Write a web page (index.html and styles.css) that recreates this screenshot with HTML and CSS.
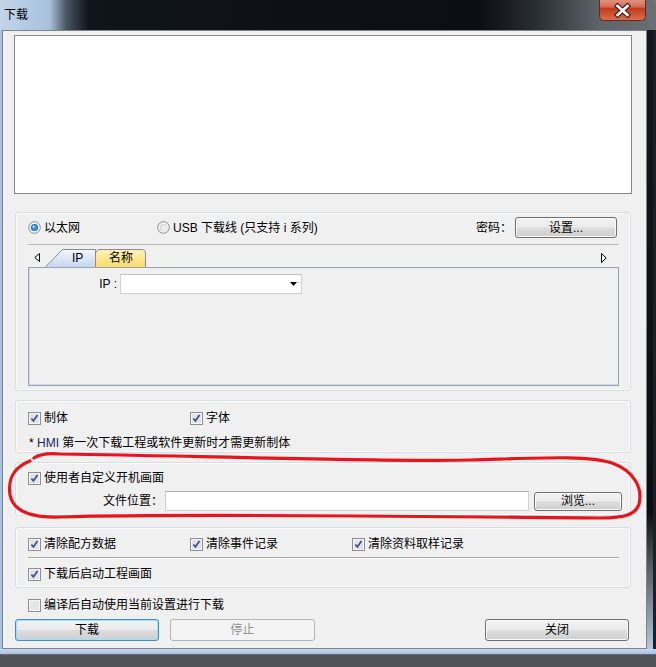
FILE: index.html
```html
<!DOCTYPE html>
<html lang="zh-CN">
<head>
<meta charset="utf-8">
<title>下载</title>
<link rel="stylesheet" href="styles.css">
</head>
<body>
<div class="screen">
  <div class="window">
    <div class="titlebar">
      <span class="title">下载</span>
      <div class="close-btn">
        <svg width="47" height="21" viewBox="0 0 47 21">
          <defs>
            <linearGradient id="cgrad" x1="0" y1="0" x2="0" y2="1">
              <stop offset="0" stop-color="#e9a595"/>
              <stop offset="0.45" stop-color="#d66a52"/>
              <stop offset="0.5" stop-color="#c3391b"/>
              <stop offset="1" stop-color="#dd6f4f"/>
            </linearGradient>
          </defs>
          <rect x="0.5" y="-4" width="46" height="24.5" rx="4" fill="url(#cgrad)" stroke="#5b2a22"/>
          <path d="M18.5 6 L28.5 15 M28.5 6 L18.5 15" stroke="#3a2424" stroke-width="5" stroke-linecap="square" fill="none"/>
          <path d="M18.5 6 L28.5 15 M28.5 6 L18.5 15" stroke="#ffffff" stroke-width="2.6" stroke-linecap="square" fill="none"/>
        </svg>
      </div>
    </div>
    <div class="frame-row">
      <div class="frame-left"></div>
      <div class="client">
        <div class="log"></div>

        <div class="panel panel-conn">
          <div class="conn-row">
            <label class="radio eth">
              <svg class="ico" width="13" height="13" viewBox="0 0 13 13">
                <circle cx="6.5" cy="6.5" r="5.8" fill="#f2f2f2" stroke="#8a8c8e"/>
                <circle cx="6.5" cy="6.5" r="3.6" fill="#1f78c8"/>
                <circle cx="6.5" cy="6.5" r="2.2" fill="#3d9be6"/>
                <circle cx="5.6" cy="5.6" r="1.1" fill="#bfe6ff"/>
              </svg>
              <span>以太网</span>
            </label>
            <label class="radio usb">
              <svg class="ico" width="13" height="13" viewBox="0 0 13 13">
                <circle cx="6.5" cy="6.5" r="5.8" fill="#f4f4f4" stroke="#8a8c8e"/>
                <circle cx="6.5" cy="6.5" r="3.8" fill="#dcdcdc"/>
                <circle cx="7" cy="7" r="2.6" fill="#eeeeee"/>
              </svg>
              <span>USB 下载线 (只支持 i 系列)</span>
            </label>
            <span class="pw-label">密码：</span>
            <button class="btn btn-set">设置...</button>
          </div>

          <div class="tabstrip">
            <span class="tab-arrow">
              <svg width="6" height="9" viewBox="0 0 6 9"><path d="M5.5 0.5 L0.8 4.5 L5.5 8.5 Z" fill="#fff" stroke="#000"/></svg>
            </span>
            <div class="tab tab-ip">
              <svg class="tab-bg" width="51" height="18" viewBox="0 0 51 18">
                <defs>
                  <linearGradient id="tipg" x1="0" y1="0" x2="0" y2="1">
                    <stop offset="0" stop-color="#f3f7fd"/>
                    <stop offset="1" stop-color="#c7d7f1"/>
                  </linearGradient>
                </defs>
                <path d="M0.5 18 L17.5 0.5 L50.5 0.5 L50.5 18" fill="url(#tipg)" stroke="#8c8c8c"/>
              </svg>
              <span class="tab-label">IP</span>
            </div>
            <div class="tab tab-name">
              <svg class="tab-bg" width="51" height="18" viewBox="0 0 51 18">
                <defs>
                  <linearGradient id="tnmg" x1="0" y1="0" x2="0" y2="1">
                    <stop offset="0" stop-color="#fff3b8"/>
                    <stop offset="1" stop-color="#fbdc68"/>
                  </linearGradient>
                </defs>
                <path d="M0.5 18 L0.5 4 L3 0.5 L47 0.5 Q50.5 0.5 50.5 4 L50.5 18" fill="url(#tnmg)" stroke="#8c8c8c"/>
              </svg>
              <span class="tab-label">名称</span>
            </div>
            <span class="tab-arrow right">
              <svg width="6" height="10" viewBox="0 0 6 10"><path d="M0.5 0.5 L5.2 5 L0.5 9.5 Z" fill="#fff" stroke="#000"/></svg>
            </span>
          </div>

          <div class="tab-content">
            <div class="ip-row">
              <span class="ip-label">IP :</span>
              <div class="combo">
                <svg width="7" height="4" viewBox="0 0 7 4"><path d="M0 0 H7 L3.5 4 Z" fill="#000"/></svg>
              </div>
            </div>
          </div>
        </div>

        <div class="panel panel-font">
          <div class="cb-grid">
            <label class="cb">
              <svg class="ico" width="13" height="13" viewBox="0 0 13 13"><rect x="0.5" y="0.5" width="12" height="12" fill="#f6f6f6" stroke="#8e8f8f"/><rect x="2" y="2" width="9" height="9" fill="#dfe2e6"/><path d="M3.4 6.5 L5.4 8.9 L9.5 3.1" stroke="#3b4d8c" stroke-width="1.7" fill="none"/></svg>
              <span>制体</span>
            </label>
            <label class="cb">
              <svg class="ico" width="13" height="13" viewBox="0 0 13 13"><rect x="0.5" y="0.5" width="12" height="12" fill="#f6f6f6" stroke="#8e8f8f"/><rect x="2" y="2" width="9" height="9" fill="#dfe2e6"/><path d="M3.4 6.5 L5.4 8.9 L9.5 3.1" stroke="#3b4d8c" stroke-width="1.7" fill="none"/></svg>
              <span>字体</span>
            </label>
          </div>
          <div class="note">* <span class="hmi">HMI</span> 第一次下载工程或软件更新时才需更新制体</div>
        </div>

        <div class="panel panel-boot">
          <label class="cb">
            <svg class="ico" width="13" height="13" viewBox="0 0 13 13"><rect x="0.5" y="0.5" width="12" height="12" fill="#f6f6f6" stroke="#8e8f8f"/><rect x="2" y="2" width="9" height="9" fill="#dfe2e6"/><path d="M3.4 6.5 L5.4 8.9 L9.5 3.1" stroke="#3b4d8c" stroke-width="1.7" fill="none"/></svg>
            <span>使用者自定义开机画面</span>
          </label>
          <div class="file-row">
            <span class="file-label">文件位置：</span>
            <div class="file-input"></div>
            <button class="btn btn-browse">浏览...</button>
          </div>
        </div>

        <div class="panel panel-clear">
          <div class="cb-grid">
            <label class="cb">
              <svg class="ico" width="13" height="13" viewBox="0 0 13 13"><rect x="0.5" y="0.5" width="12" height="12" fill="#f6f6f6" stroke="#8e8f8f"/><rect x="2" y="2" width="9" height="9" fill="#dfe2e6"/><path d="M3.4 6.5 L5.4 8.9 L9.5 3.1" stroke="#3b4d8c" stroke-width="1.7" fill="none"/></svg>
              <span>清除配方数据</span>
            </label>
            <label class="cb">
              <svg class="ico" width="13" height="13" viewBox="0 0 13 13"><rect x="0.5" y="0.5" width="12" height="12" fill="#f6f6f6" stroke="#8e8f8f"/><rect x="2" y="2" width="9" height="9" fill="#dfe2e6"/><path d="M3.4 6.5 L5.4 8.9 L9.5 3.1" stroke="#3b4d8c" stroke-width="1.7" fill="none"/></svg>
              <span>清除事件记录</span>
            </label>
            <label class="cb">
              <svg class="ico" width="13" height="13" viewBox="0 0 13 13"><rect x="0.5" y="0.5" width="12" height="12" fill="#f6f6f6" stroke="#8e8f8f"/><rect x="2" y="2" width="9" height="9" fill="#dfe2e6"/><path d="M3.4 6.5 L5.4 8.9 L9.5 3.1" stroke="#3b4d8c" stroke-width="1.7" fill="none"/></svg>
              <span>清除资料取样记录</span>
            </label>
          </div>
          <div class="sep"></div>
          <label class="cb row2">
            <svg class="ico" width="13" height="13" viewBox="0 0 13 13"><rect x="0.5" y="0.5" width="12" height="12" fill="#f6f6f6" stroke="#8e8f8f"/><rect x="2" y="2" width="9" height="9" fill="#dfe2e6"/><path d="M3.4 6.5 L5.4 8.9 L9.5 3.1" stroke="#3b4d8c" stroke-width="1.7" fill="none"/></svg>
            <span>下载后启动工程画面</span>
          </label>
        </div>

        <label class="cb auto-row">
          <svg class="ico" width="13" height="13" viewBox="0 0 13 13"><rect x="0.5" y="0.5" width="12" height="12" fill="#f6f6f6" stroke="#8e8f8f"/><rect x="2" y="2" width="9" height="9" fill="#e4e6e9"/></svg>
          <span>编译后自动使用当前设置进行下载</span>
        </label>

        <div class="btn-row">
          <button class="btn btn-dl">下载</button>
          <button class="btn btn-stop" disabled>停止</button>
          <button class="btn btn-close">关闭</button>
        </div>
      </div>
      <div class="frame-right"></div>
    </div>
    <div class="frame-bottom"></div>
  </div>

  <svg class="annot" width="656" height="667" viewBox="0 0 656 667">
    <path d="M34 458 C 40 454, 48 453, 60 454 C 160 455, 380 462, 470 460 C 540 458, 588 455, 612 463 C 634 471, 643 488, 639 504 C 636 514, 626 518, 600 518 C 450 517, 200 513, 60 517 C 28 518, 13 510, 10 495 C 8 480, 12 468, 30 461"
          fill="none" stroke="#e8141c" stroke-width="3.2" stroke-linecap="round" stroke-linejoin="round"/>
  </svg>
</div>
</body>
</html>
```

FILE: styles.css
```css
* { box-sizing: border-box; }
html, body { margin: 0; padding: 0; }
body {
  width: 656px;
  height: 667px;
  overflow: hidden;
  font-family: "Liberation Sans", "Noto Sans CJK SC", sans-serif;
  font-size: 12px;
  line-height: 16px;
  color: #000;
}
.screen {
  position: relative;
  width: 656px;
  height: 667px;
  overflow: hidden;
  background: linear-gradient(#6f7276, #505357);
}
.window {
  display: flex;
  flex-direction: column;
  width: 656px;
}
.titlebar {
  height: 30px;
  display: flex;
  align-items: flex-start;
  border-top-right-radius: 7px;
  background: linear-gradient(to right, #c2d6ea 0, #a8c1dc 50px, #4a5664 66px, #10151b 88px, #0b0e12 480px, #2c3136 540px, #5f646a 600px, #6a6f74 656px);
}
.title {
  padding: 7px 0 0 4px;
  line-height: 16px;
  color: #000;
}
.close-btn {
  margin-left: auto;
  margin-right: 10px;
  width: 47px;
  height: 21px;
}
.close-btn svg { display: block; }

.frame-row { display: flex; }
.frame-left { width: 2px; background: #a9c3df; }
.frame-right {
  width: 9px;
  background: linear-gradient(#14181d 0%, #0b0e12 78%, #50565c 86%, #b5c7da 100%);
  box-shadow: inset -3px 0 0 #1c1f23;
}
.frame-bottom {
  height: 6px;
  width: 656px;
  background: linear-gradient(#c8d9ec, #a9c1db);
  border-bottom: 1px solid #5f6b78;
}

.client {
  width: 645px;
  border: 1px solid #7b838d;
  background: #f0f0f0;
  padding: 4px 14px 7px 11px;
  display: flex;
  flex-direction: column;
}
.log {
  height: 159px;
  border: 1px solid #878787;
  background: #fff;
}

.panel {
  margin: 0 1px;
  border: 1px solid #d5dfe5;
  border-radius: 3px;
  box-shadow: inset 0 0 0 1px #fbfbfb;
}
.ico { display: block; flex: none; }

/* connection panel */
.panel-conn {
  margin-top: 18px;
  height: 179px;
  padding: 4px 11px 4px 12px;
}
.conn-row {
  display: flex;
  align-items: center;
  height: 21px;
  padding-right: 2px;
}
.radio {
  display: flex;
  align-items: center;
  gap: 3px;
}
.radio.eth { width: 129px; }
.pw-label { margin-left: auto; margin-right: 3px; }
.btn-set { width: 102px; height: 21px; }

.tabstrip {
  margin-top: 6px;
  height: 23px;
  border-top: 1px solid #b8b8b8;
  display: flex;
  align-items: flex-end;
  padding: 0 12px 0 6px;
}
.tab-arrow {
  align-self: flex-start;
  margin-top: 8px;
  display: block;
}
.tab-arrow svg { display: block; }
.tab-arrow.right { margin-left: auto; }
.tab {
  position: relative;
  width: 51px;
  height: 18px;
  display: flex;
  align-items: center;
}
.tab-bg { position: absolute; left: 0; top: 0; }
.tab-label { position: relative; line-height: 18px; }
.tab-ip { margin-left: 5px; }
.tab-ip .tab-label { margin-left: 27px; }
.tab-name { margin-left: -1px; }
.tab-name .tab-label { margin-left: 14px; }

.tab-content {
  height: 119px;
  border: 1px solid #9ba4b1;
  box-shadow: inset 1px 0 0 #cdd9ea, inset 0 -1px 0 #cdd9ea;
  padding-top: 6px;
}
.ip-row {
  display: flex;
  align-items: center;
  height: 20px;
}
.ip-label {
  width: 88px;
  text-align: right;
  margin-right: 3px;
}
.combo {
  width: 182px;
  height: 20px;
  background: #fff;
  border: 1px solid #d2d2d2;
  border-top-color: #c4c4c4;
  display: flex;
  align-items: center;
  justify-content: flex-end;
  padding-right: 4px;
}
.combo svg { display: block; }

/* checkboxes */
.cb {
  display: flex;
  align-items: center;
  gap: 3px;
  height: 16px;
}
.cb-grid {
  display: grid;
  grid-template-columns: 162px 162px 1fr;
  height: 16px;
}

.panel-font {
  margin-top: 9px;
  height: 53px;
  padding: 9px 12px 0;
}
.note {
  margin-top: 9px;
  padding-left: 1px;
  line-height: 16px;
}
.hmi { color: #1e1e5e; }

.panel-boot {
  margin-top: 9px;
  height: 54px;
  padding: 7px 8px 0 12px;
}
.file-row {
  display: flex;
  align-items: center;
  height: 20px;
  margin-top: 5px;
}
.file-label {
  width: 135px;
  text-align: right;
  margin-right: 2px;
}
.file-input {
  width: 364px;
  height: 20px;
  background: #fff;
  border: 1px solid #d0d0d0;
  border-top-color: #acacac;
}
.btn-browse {
  margin-left: 5px;
  width: 88px;
  height: 19px;
}

.panel-clear {
  margin-top: 11px;
  height: 61px;
  padding: 8px 11px 0 12px;
}
.sep {
  margin-top: 5px;
  height: 2px;
  border-top: 1px solid #a7a7a7;
  border-bottom: 1px solid #ffffff;
}
.row2 { margin-top: 7px; }

.auto-row {
  margin-top: 9px;
  padding-left: 14px;
}

/* buttons */
.btn {
  font: inherit;
  font-family: "Liberation Sans", "Noto Sans CJK SC", sans-serif;
  font-size: 12px;
  line-height: 1;
  color: #000;
  padding: 0;
  border: 1px solid #707070;
  border-radius: 3px;
  background: linear-gradient(#f2f2f2 0%, #ebebeb 48%, #dddddd 52%, #cfcfcf 100%);
  box-shadow: inset 0 0 0 1px #fbfbfb;
  display: flex;
  align-items: center;
  justify-content: center;
}
.btn-row {
  display: flex;
  margin: 6px 3px 0 1px;
  height: 22px;
}
.btn-dl {
  width: 144px;
  height: 22px;
  border-color: #3c8fd0;
  box-shadow: inset 0 0 0 1px #9ee0f8;
}
.btn-stop {
  margin-left: 11px;
  width: 145px;
  height: 22px;
  border-color: #b1b5b8;
  background: #f4f4f4;
  box-shadow: none;
  color: #8d8d8d;
}
.btn-close {
  margin-left: auto;
  width: 144px;
  height: 22px;
}

.annot {
  position: absolute;
  left: 0;
  top: 0;
  pointer-events: none;
}
```
